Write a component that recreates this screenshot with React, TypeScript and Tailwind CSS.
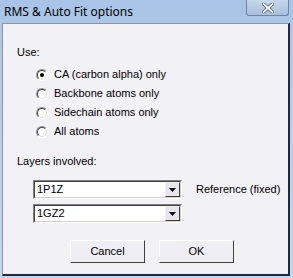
export default function App() {
  const options = [
    { label: "CA (carbon alpha) only", checked: true },
    { label: "Backbone atoms only", checked: false },
    { label: "Sidechain atoms only", checked: false },
    { label: "All atoms", checked: false },
  ];

  const layers = [
    { value: "1P1Z", note: "Reference (fixed)" },
    { value: "1GZ2", note: "" },
  ];

  return (
    <div
      className="relative w-[293px] h-[278px] overflow-hidden bg-gradient-to-b from-[#a8c4e6] via-[#b9cfe9] to-[#c4d6ec] text-black"
      style={{ fontFamily: '"Liberation Sans", Arial, sans-serif' }}
    >
      {/* title bar */}
      <div className="flex h-[23px] items-center justify-between pl-[4px]">
        <span className="text-[12px] leading-none text-black" style={{ fontFamily: '"Noto Sans", "Liberation Sans", sans-serif' }}>
          RMS &amp; Auto Fit options
        </span>
      </div>
      <div className="absolute right-[4px] top-0 flex h-[16px] w-[43px] items-center justify-center rounded-b-[3px] border border-t-0 border-[#6f84a6] bg-gradient-to-b from-[#c6d6ea] to-[#a7bfdd]">
        <svg width="12" height="10" viewBox="0 0 12 10">
          <path d="M1.5 1 L10.5 9 M10.5 1 L1.5 9" stroke="#3c4a62" strokeWidth="3.2" strokeLinecap="square" />
          <path d="M1.5 1 L10.5 9 M10.5 1 L1.5 9" stroke="#ffffff" strokeWidth="1.8" strokeLinecap="square" />
        </svg>
      </div>

      {/* client area */}
      <div className="ml-[2px] h-[253px] w-[288px] border-l border-t border-[#8a96a8] border-r-2 border-b-2 border-r-[#1e2a46] border-b-[#1e2a46] bg-[#f2f1f6] text-[11px]">
        <div className="pl-[14px] pt-[22px] leading-[13px]">Use:</div>

        <div className="mt-[6px] flex flex-col pl-[33px]">
          {options.map((o) => (
            <div key={o.label} className="flex h-[19px] items-center gap-[6px]">
              <span className="relative flex h-[12px] w-[12px] items-center justify-center rounded-full border border-t-[#8d8d8d] border-l-[#8d8d8d] border-r-white border-b-white bg-white">
                <span className="absolute inset-0 rounded-full border border-t-[#404040] border-l-[#404040] border-r-[#e0e0e0] border-b-[#e0e0e0]" />
                {o.checked && <span className="h-[4px] w-[4px] rounded-full bg-black" />}
              </span>
              <span className="leading-[13px]">{o.label}</span>
            </div>
          ))}
        </div>

        <div className="mt-[14px] pl-[14px] leading-[13px]">Layers involved:</div>

        <div className="mt-[12px] flex flex-col gap-[5px] pl-[30px]">
          {layers.map((l) => (
            <div key={l.value} className="flex items-center">
              <div className="flex h-[19px] w-[149px] items-center border border-t-[#808080] border-l-[#808080] border-r-white border-b-white bg-white">
                <div className="flex h-full flex-1 items-center border border-t-[#404040] border-l-[#404040] border-r-[#d4d0c8] border-b-[#d4d0c8] pl-[2px]">
                  <span className="flex-1 leading-[13px]">{l.value}</span>
                  <span className="flex h-[15px] w-[15px] items-center justify-center border border-t-[#f4f4f4] border-l-[#f4f4f4] border-r-[#404040] border-b-[#404040] bg-[#e6e4ec]">
                    <svg width="7" height="4" viewBox="0 0 7 4">
                      <path d="M0 0 H7 L3.5 4 Z" fill="#000" />
                    </svg>
                  </span>
                </div>
              </div>
              {l.note && <span className="ml-[14px] leading-[13px]">{l.note}</span>}
            </div>
          ))}
        </div>

        <div className="mt-[17px] flex gap-[14px] pl-[67px]">
          {["Cancel", "OK"].map((b) => (
            <button
              key={b}
              className="flex h-[23px] w-[75px] items-center justify-center border border-t-white border-l-white border-r-[#404040] border-b-[#404040] bg-[#efeef4] leading-[13px]"
            >
              {b}
            </button>
          ))}
        </div>
      </div>
    </div>
  );
}
